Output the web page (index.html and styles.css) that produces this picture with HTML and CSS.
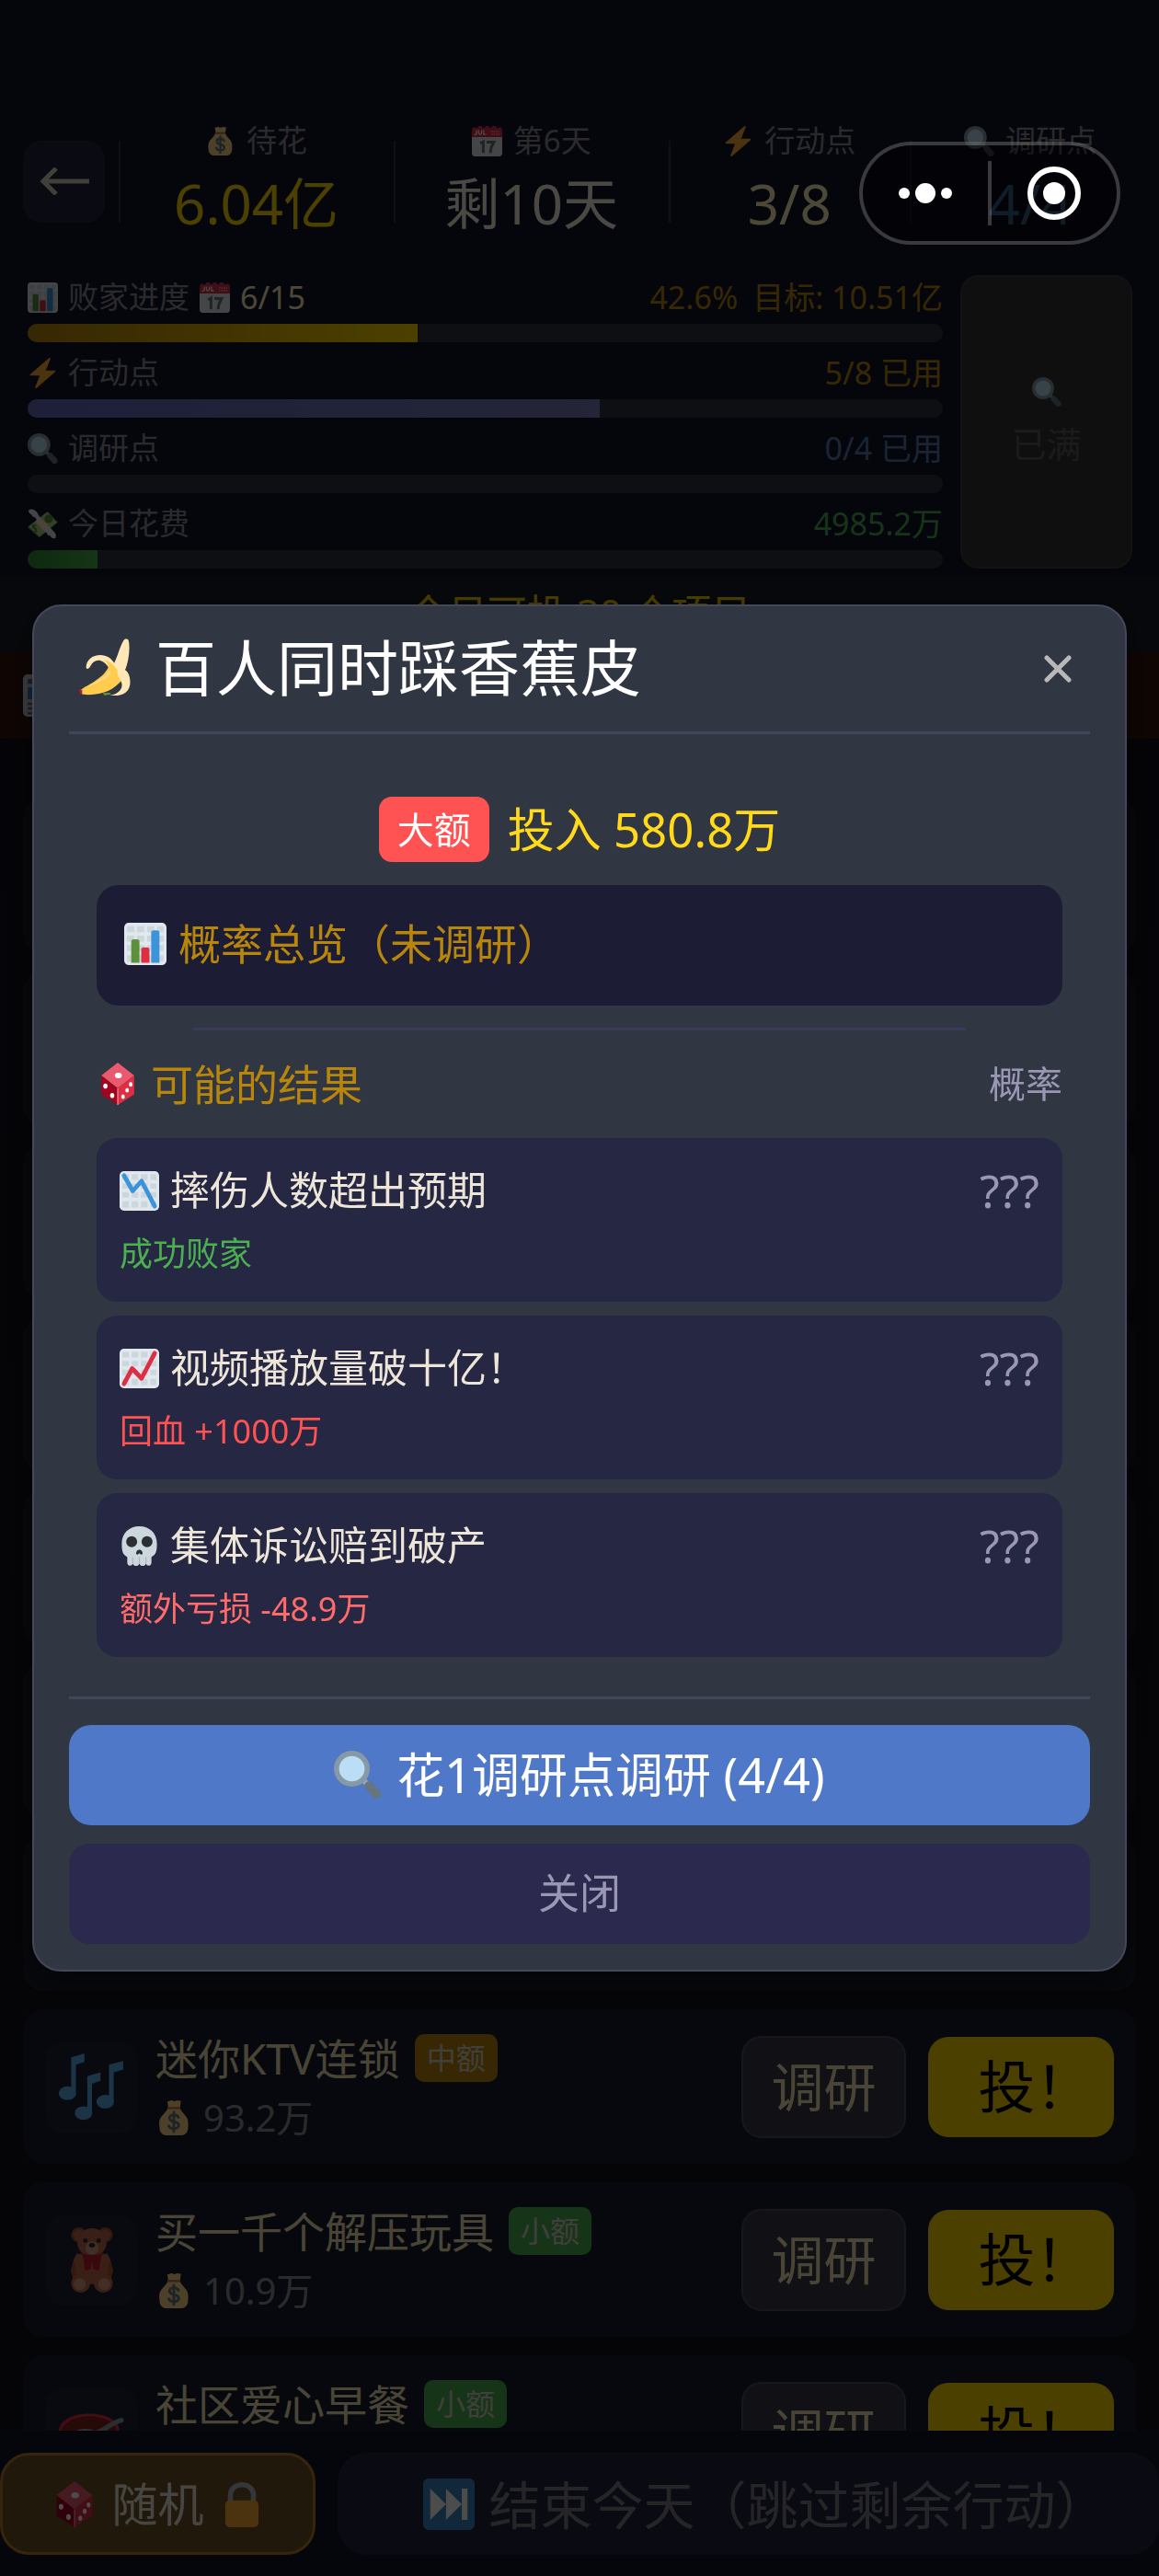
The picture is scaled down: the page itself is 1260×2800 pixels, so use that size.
FILE: index.html
```html
<!DOCTYPE html>
<html lang="zh-CN">
<head>
<meta charset="utf-8">
<meta name="viewport" content="width=device-width, initial-scale=1">
<title>百人同时踩香蕉皮</title>
<link rel="stylesheet" href="styles.css">
</head>
<body>
<svg class="sprite" aria-hidden="true">
  <symbol id="bag" viewBox="0 0 36 36">
    <path fill="#fdd888" d="M31.900 27.600c0 4-2.400 7.400-6.400 7.400h-15C6.500 35 4 31.600 4 27.600c0-2.300-1-4.800.6-8.600C6.500 14.500 12 12 12.200 7h11.600c.2 5 5.700 7.500 7.400 12 1.400 3.800.7 6.300.7 8.600z"/>
    <path fill="#bf6952" d="M12 7.200h12v2.200H12z"/>
    <path fill="#fdd888" d="M11.500 1.500c2 .8 2.500-.7 4.300-.5 1.400.1 1.600.8 2.700.8s2-1 3.500-.8c1.200.2 1.700.8 3 .4l-1 6H12.500z"/>
    <path fill="none" stroke="#67757f" stroke-width="2.600" stroke-linecap="round" d="M22.500 17.500c-1-2-3-2.500-4.500-2.500-2.400 0-4.200 1.400-4.200 3.300 0 4.800 9 2.300 9 7 0 2-2 3.400-4.700 3.400-2 0-4-.8-5-2.700M18 12.500v19"/>
  </symbol>
  <symbol id="calendar" viewBox="0 0 36 36">
    <path fill="#e0e7ec" d="M36 32a4 4 0 0 1-4 4H4a4 4 0 0 1-4-4V9a4 4 0 0 1 4-4h28a4 4 0 0 1 4 4z"/>
    <path fill="#dd2e44" d="M0 13V5a4 4 0 0 1 3-4c1 2 4 2 5-1h4c0 3 4 3 4 0h4c0 3 4 3 4 0h4c1 3 4 3 5 1a4 4 0 0 1 3 4v8z"/>
    <path fill="none" stroke="#f5f8fa" stroke-width="1.400" d="M5.500 5v4c0 1.500-2 1.500-2.500.5M8 5v3c0 2.500 3.500 2.500 3.500 0V5M14 5v5h3"/>
    <path stroke="#f4abba" stroke-width="1.500" stroke-dasharray="1.500 1.200" d="M23 6.500h10M23 9.500h10"/>
    <path fill="none" stroke="#66757f" stroke-width="3.200" d="M10 20.500l3.500-2v13.500M17.500 19H26c-2.500 4-4 8-4 13"/>
  </symbol>
  <symbol id="bolt" viewBox="0 0 36 36"><path fill="#ffac33" d="M32.900 15.500c-.2-.3-.5-.5-.9-.5H21.500L27 1.400c.3-1.100-.8-1.900-1.700-1.100L3.200 19.300c-.8.700-.3 1.700.8 1.700h10.300L9 34.600c-.3 1.200.9 1.900 1.700 1.100l22-19c.3-.3.400-.8.200-1.200z"/></symbol>
  <symbol id="lens" viewBox="0 0 36 36">
    <path stroke="#9aaab4" stroke-width="4" d="M22 22l5 5"/>
    <path stroke="#66757f" stroke-width="7" stroke-linecap="round" d="M26.500 26.500l5.500 6"/>
    <circle cx="13.500" cy="13.500" r="13.500" fill="#8899a6"/><circle cx="13.500" cy="13.500" r="9.600" fill="#bbddf5"/>
  </symbol>
  <symbol id="grid" viewBox="0 0 36 36">
    <rect width="36" height="36" rx="4" fill="#e1e8ed"/>
    <path fill="#ccd6dd" d="M2.500 3h6v5h-6zM11 3h6v5h-6zM19.500 3h6v5h-6zM28 3h5.500v5H28zM2.500 11h6v5h-6zM11 11h6v5h-6zM19.500 11h6v5h-6zM28 11h5.500v5H28zM2.500 19h6v5h-6zM11 19h6v5h-6zM19.500 19h6v5h-6zM28 19h5.500v5H28zM2.500 27.500h6v5.500h-6zM11 27.500h6v5.500h-6zM19.500 27.500h6v5.500h-6zM28 27.500h5.500v5.500H28z"/>
  </symbol>
  <symbol id="bars" viewBox="0 0 36 36">
    <use href="#grid"/>
    <path fill="#5c913b" d="M6 34V16a2 2 0 0 1 2-2h3a2 2 0 0 1 2 2v18z"/>
    <path fill="#dd2e44" d="M14.500 34V23a2 2 0 0 1 2-2h3a2 2 0 0 1 2 2v11z"/>
    <path fill="#3b94d9" d="M23 34V8.500a2 2 0 0 1 2-2h3a2 2 0 0 1 2 2V34z"/>
  </symbol>
  <symbol id="down" viewBox="0 0 36 36"><use href="#grid"/><path fill="none" stroke="#3b94d9" stroke-width="4" stroke-linecap="round" stroke-linejoin="round" d="M4 4l8 14 8-9 12 23"/></symbol>
  <symbol id="up" viewBox="0 0 36 36"><use href="#grid"/><path fill="none" stroke="#dd2e44" stroke-width="4" stroke-linecap="round" stroke-linejoin="round" d="M4 32l7.500-14 8.500 9L32 4"/></symbol>
  <symbol id="wings" viewBox="0 0 36 36">
    <path fill="#5c913b" d="M0 22L24 3l12 13-22 18z"/><path fill="#a7d28b" d="M1 21L23 4l12 12-21 17z"/>
    <path fill="#ffe8b6" d="M9 15l6-5 12 13-6 5z"/>
    <circle cx="25" cy="12" r="5" fill="#5c913b"/>
    <path fill="none" stroke="#5c913b" stroke-width="2" d="M10 20c-4-2-5 3-2 3s3 5-1 4M6 19l5 9"/>
    <path fill="#e1e8ed" d="M1 2c3-3 8-1 10 2l6 10c-6 1-7-2-8-4-3 0-4-2-4-3-2 0-4-3-4-5zM20 21c6-1 8 3 11 6 3 2 3 6 2 8-3 1-6-1-6-3-4 0-4-3-4-3-2-1-3-4-3-8z"/>
  </symbol>
  <symbol id="dice" viewBox="0 0 36 36">
    <path fill="#ea596e" d="M18 0L32 11 18 22 4 11z"/><path fill="#a0041e" d="M4 11l14 11v14L4 27z"/><path fill="#dd2e44" d="M32 11L18 22v14l14-9z"/>
    <path stroke="#f4abba" stroke-width=".8" d="M18 22v14"/>
    <g fill="#fff"><ellipse cx="18.500" cy="11" rx="3" ry="2.300"/><ellipse cx="7.500" cy="20" rx="1.800" ry="2.200"/><ellipse cx="13.300" cy="28" rx="1.800" ry="2.200"/><ellipse cx="29" cy="18.500" rx="1.500" ry="2"/><ellipse cx="26" cy="23.500" rx="1.500" ry="2"/><ellipse cx="22.500" cy="29" rx="1.500" ry="2"/></g>
  </symbol>
  <symbol id="banana" viewBox="0 0 36 36">
    <path fill="#ffe8b6" d="M24 20c-2-1-2-3-1-5 2-4 3-9 5.500-13.500C29.300 0 31 0 31.700 1c1 3 .8 11-1.700 18-1 2-4 3-6 1z"/>
    <path fill="#ffe8b6" d="M5 18.500c0-5 4-8 9-8 4 0 7 2 9 5.500l2 6-6-4c-4-6-9-5-11-1-1 2-2.500 3-3 1.500z"/>
    <path fill="#ffcc4d" d="M16 14c5 0 6 3 9 6 4 3 3 6 1 8-6 6-13 7.500-20 7.500-3 0-5-.5-4.500-3C7 29 17 24 19 18c.3-2-1-3-3-4z"/>
    <path fill="#ffd983" d="M3 31c9-3 14-7 17-11 3 2-4 8-17 11z"/>
    <path fill="#ffe8b6" d="M25 19c3-.5 6 1 7 4 2 6 .5 12-7 13-3 .3-4 .2-5 0 6-1 9-5 7-9-1-2-3-4-2-8z"/>
    <path fill="#be1931" d="M.5 32l2 .5v2.500H1.300z"/><path fill="#5c913b" d="M15.500 34.300h5v1l-4 .7z"/>
  </symbol>
  <symbol id="skull" viewBox="0 0 36 36">
    <path fill="#ccd6dd" d="M34 16C34 6 27 0 18 0S2 6 2 16c0 7 1 10 5 12v5c0 3 4 4 5 1 1 3 5 3 6 0 1 3 5 3 6 0 1 3 5 2 5-1v-5c4-2 5-5 5-12z"/>
    <path stroke="#aab8c2" d="M12 28v6M18 28v6M24 28v6"/>
    <circle cx="11" cy="14" r="5" fill="#292f33"/><circle cx="25" cy="14" r="5" fill="#292f33"/><path fill="#292f33" d="M15 25c0-5 6-5 6 0-1 1.500-2 .5-3-.5-1 1-2 2-3 .5z"/>
  </symbol>
  <symbol id="music" viewBox="0 0 36 36">
    <g fill="#5dadec"><ellipse cx="5" cy="21.500" rx="4.600" ry="3.600"/><path d="M7 21.500V2.500l7-2v4.500l-4.500 1.500v15z"/><ellipse cx="13.500" cy="32" rx="4.600" ry="3.600"/><path d="M15.500 32V12.500l7-2V15L18 16.500V32z"/><ellipse cx="25" cy="26" rx="4.600" ry="3.600"/><path d="M27 26V6.500l7.500-2V9l-5 1.500V26z"/></g>
  </symbol>
  <symbol id="bear" viewBox="0 0 36 36">
    <g fill="#a5552d"><circle cx="11" cy="5" r="4"/><circle cx="25" cy="5" r="4"/></g>
    <g fill="#c1694f"><circle cx="11" cy="5" r="2.800"/><circle cx="25" cy="5" r="2.800"/><ellipse cx="18" cy="9" rx="7.700" ry="7.500"/><path d="M10 15c-3 4-4 13 0 16h16c4-3 3-12 0-16z"/></g>
    <g fill="#a5552d"><path d="M9 19c-3 3-3 8 1 9zM27 19c3 3 3 8-1 9z"/></g>
    <circle cx="12" cy="30.500" r="5" fill="#c1694f"/><circle cx="24" cy="30.500" r="5" fill="#c1694f"/><circle cx="11.500" cy="31" r="3.200" fill="#d99e82"/><circle cx="24.500" cy="31" r="3.200" fill="#d99e82"/>
    <circle cx="18" cy="12" r="3.500" fill="#d99e82"/>
    <g fill="#292f33"><circle cx="14.500" cy="8" r="1.200"/><circle cx="21.500" cy="8" r="1.200"/><ellipse cx="18" cy="10.500" rx="1.600" ry="1.200"/></g>
    <path fill="#be1931" d="M12.500 14.500c3 1.500 8 1.500 11 0l-.8 3-1 6.500-3-1-.7-4-.7 4-3 1-.8-6.500z"/>
  </symbol>
  <symbol id="bowl" viewBox="0 0 36 36">
    <path fill="#dd2e44" d="M2 18h30c0 12-6 16-15 16S2 30 2 18z"/>
    <ellipse cx="16.500" cy="17" rx="16" ry="9" fill="#dd2e44"/><ellipse cx="16.500" cy="17.800" rx="14.800" ry="8.400" fill="#7c2419"/>
    <ellipse cx="14.500" cy="20.500" rx="8" ry="4.500" fill="#99aab5"/><path stroke="#8899a6" stroke-width="2.500" stroke-linecap="round" d="M18 18.500c6 0 9-5.500 15.500-7" fill="none"/>
  </symbol>
  <symbol id="lock" viewBox="0 0 36 36"><path fill="none" stroke="#aab8c2" stroke-width="4" d="M9 17v-6c0-11 18-11 18 0v6"/><rect x="5" y="15" width="26" height="21" rx="3.500" fill="#ffac33"/></symbol>
  <symbol id="next" viewBox="0 0 36 36"><rect width="36" height="36" rx="4" fill="#3b88c3"/><path fill="#fff" d="M5 7l11 11L5 29zM16 7l11 11-11 11zM27 7h4v22h-4z"/></symbol>
  <symbol id="phone" viewBox="0 0 36 36"><rect width="36" height="36" rx="4" fill="#ccd6dd"/><rect x="4" y="4" width="28" height="4" fill="#66757f"/><rect x="4" y="11" width="16" height="10" fill="#3b88c3"/><path stroke="#66757f" stroke-width="2" d="M4 25h28M4 29h28M4 33h28"/></symbol>
</svg>

<div class="app">
  <header class="topbar">
    <button class="back" type="button" aria-label="返回">
      <svg viewBox="0 0 54 30" aria-hidden="true"><path d="M18 1L4 15l14 14M4 15h50"/></svg>
    </button>
    <div class="stats">
      <div class="stat"><span class="stat-label"><svg class="emoji"><use href="#bag"/></svg>待花</span><strong class="stat-value gold">6.04亿</strong></div>
      <div class="stat"><span class="stat-label"><svg class="emoji"><use href="#calendar"/></svg>第6天</span><strong class="stat-value">剩10天</strong></div>
      <div class="stat"><span class="stat-label"><svg class="emoji"><use href="#bolt"/></svg>行动点</span><strong class="stat-value cream">3/8</strong></div>
      <div class="stat"><span class="stat-label"><svg class="emoji"><use href="#lens"/></svg>调研点</span><strong class="stat-value sky">4/4</strong></div>
    </div>
  </header>

  <section class="progress">
    <div class="meters">
      <div class="meter">
        <div class="meter-head"><span class="meter-name"><svg class="emoji"><use href="#bars"/></svg>败家进度 <svg class="emoji"><use href="#calendar"/></svg><b class="meter-value cream">6/15</b></span><span class="meter-value target amber">42.6% <span>目标: 10.51亿</span></span></div>
        <div class="track"><div class="fill fill-gold" style="width:42.6%"></div></div>
      </div>
      <div class="meter">
        <div class="meter-head"><span class="meter-name"><svg class="emoji"><use href="#bolt"/></svg>行动点</span><span class="meter-value amber">5/8 已用</span></div>
        <div class="track"><div class="fill fill-blue" style="width:62.5%"></div></div>
      </div>
      <div class="meter">
        <div class="meter-head"><span class="meter-name"><svg class="emoji"><use href="#lens"/></svg>调研点</span><span class="meter-value blue">0/4 已用</span></div>
        <div class="track"></div>
      </div>
      <div class="meter">
        <div class="meter-head"><span class="meter-name"><svg class="emoji"><use href="#wings"/></svg>今日花费</span><span class="meter-value green">4985.2万</span></div>
        <div class="track"><div class="fill fill-green" style="width:7.6%"></div></div>
      </div>
    </div>
    <button class="full" type="button" disabled><svg class="emoji"><use href="#lens"/></svg>已满</button>
  </section>

  <p class="today">今日可投 30 个项目</p>
  <div class="news"><svg class="news-icon" aria-hidden="true"><use href="#phone"/></svg></div>

  <ul class="projects">
    <li class="project"></li><li class="project"></li><li class="project"></li><li class="project"></li><li class="project"></li><li class="project"></li><li class="project"></li>
    <li class="project">
      <span class="tile"><svg><use href="#music"/></svg></span>
      <div class="info"><div class="name">迷你KTV连锁<span class="tag tag-mid">中额</span></div><div class="cost"><svg class="emoji"><use href="#bag"/></svg>93.2万</div></div>
      <div class="project-actions"><button class="research" type="button">调研</button><button class="invest" type="button">投！</button></div>
    </li>
    <li class="project">
      <span class="tile"><svg><use href="#bear"/></svg></span>
      <div class="info"><div class="name">买一千个解压玩具<span class="tag tag-small">小额</span></div><div class="cost"><svg class="emoji"><use href="#bag"/></svg>10.9万</div></div>
      <div class="project-actions"><button class="research" type="button">调研</button><button class="invest" type="button">投！</button></div>
    </li>
    <li class="project">
      <span class="tile"><svg><use href="#bowl"/></svg></span>
      <div class="info"><div class="name">社区爱心早餐<span class="tag tag-small">小额</span></div><div class="cost"></div></div>
      <div class="project-actions"><button class="research" type="button">调研</button><button class="invest" type="button">投！</button></div>
    </li>
  </ul>

  <footer class="actions">
    <button class="random" type="button"><svg class="emoji"><use href="#dice"/></svg>随机<svg class="emoji"><use href="#lock"/></svg></button>
    <button class="end" type="button"><svg class="emoji"><use href="#next"/></svg>结束今天（跳过剩余行动）</button>
  </footer>
</div>

<div class="overlay">
  <div class="modal" role="dialog" aria-modal="true" aria-labelledby="modal-title">
    <div class="modal-head">
      <h1 class="modal-title" id="modal-title"><svg class="emoji"><use href="#banana"/></svg>百人同时踩香蕉皮</h1>
      <button class="close-x" type="button" aria-label="关闭"><svg viewBox="0 0 30 30" aria-hidden="true"><path d="M3 3l24 24M27 3L3 27"/></svg></button>
    </div>
    <div class="modal-body">
      <div class="price"><span class="price-tag">大额</span><span class="price-text">投入 580.8万</span></div>
      <div class="overview"><svg class="emoji"><use href="#bars"/></svg>概率总览（未调研）</div>
      <hr class="rule">
      <div class="results-head"><h2 class="results-title"><svg class="emoji"><use href="#dice"/></svg>可能的结果</h2><span class="results-col">概率</span></div>
      <ul class="results">
        <li class="result"><div class="result-top"><span class="result-name"><svg class="emoji"><use href="#down"/></svg>摔伤人数超出预期</span><span class="odds">???</span></div><div class="effect effect-good">成功败家</div></li>
        <li class="result"><div class="result-top"><span class="result-name"><svg class="emoji"><use href="#up"/></svg>视频播放量破十亿！</span><span class="odds">???</span></div><div class="effect effect-bad">回血 +1000万</div></li>
        <li class="result"><div class="result-top"><span class="result-name"><svg class="emoji"><use href="#skull"/></svg>集体诉讼赔到破产</span><span class="odds">???</span></div><div class="effect effect-loss">额外亏损 -48.9万</div></li>
      </ul>
    </div>
    <div class="modal-foot">
      <button class="primary" type="button"><svg class="emoji"><use href="#lens"/></svg>花1调研点调研 (4/4)</button>
      <button class="dismiss" type="button">关闭</button>
    </div>
  </div>
</div>

<div class="capsule">
  <button class="capsule-btn" type="button" aria-label="更多"><svg class="dots" viewBox="0 0 60 24" aria-hidden="true"><circle cx="7" cy="12" r="6"/><circle cx="30" cy="12" r="11"/><circle cx="53" cy="12" r="6"/></svg></button>
  <span class="capsule-line"></span>
  <button class="capsule-btn" type="button" aria-label="退出"><svg class="ring" viewBox="0 0 60 60" aria-hidden="true"><circle class="ring-outer" cx="30" cy="30" r="26"/><circle cx="30" cy="30" r="12"/></svg></button>
</div>
</body>
</html>
```
FILE: styles.css
```css
* { box-sizing: border-box; }

body {
  margin: 0;
  background: #101019;
  color: #f5f0e0;
  font-family: "Noto Sans", "Noto Sans CJK SC", sans-serif;
  font-weight: 400;
}

button {
  margin: 0;
  padding: 0;
  border: 0;
  background: none;
  color: inherit;
  font: inherit;
  line-height: 1;
}

ul, p, h1, h2 { margin: 0; padding: 0; font-weight: 400; list-style: none; }
b, strong { font-weight: 400; }

.sprite { position: absolute; width: 0; height: 0; }
.emoji { flex: none; width: 1em; height: 1em; }

.gold { color: #ffd700; }
.cream { color: #fff0b8; }
.sky { color: #5b9bd5; }
.amber { color: #b8860b; }
.blue { color: #5878b0; }
.green { color: #4caf50; }

/* Game screen */
.app { display: flex; flex-direction: column; height: 100vh; overflow: hidden; }

.topbar {
  display: flex;
  align-items: center;
  gap: 15px;
  padding: 131px 9px 36px 25px;
  background: #12142a;
}
.back {
  display: grid;
  place-items: center;
  width: 89px;
  height: 89px;
  border-radius: 20px;
  background: #222440;
}
.back svg { width: 54px; height: 30px; fill: none; stroke: #d8d2bc; stroke-width: 5; }
.stats { flex: 1; display: grid; grid-template-columns: 8fr 8fr 7fr 7fr; }
.stat {
  display: flex;
  flex-direction: column;
  align-items: center;
  gap: 8px;
  background: linear-gradient(#32344a, #32344a) left center / 2px 89px no-repeat;
}
.stat-label { display: flex; align-items: center; gap: 12px; color: #8e8e98; font-size: 33px; line-height: 44px; }
.stat-value { font-size: 60px; line-height: 76px; padding-bottom: 4px; }

.progress { display: flex; gap: 19px; padding: 0 29px 8px 30px; background: #12142a; }
.meters { flex: 1; display: flex; flex-direction: column; gap: 9px; }
.meter { display: flex; flex-direction: column; gap: 5px; }
.meter-head { display: flex; justify-content: space-between; font-size: 33px; line-height: 48px; }
.meter-name { display: flex; align-items: center; gap: 11px; color: #8e8e98; }
.meter-value { font-size: 34px; }
.target { display: flex; gap: 16px; }
.track { height: 20px; border-radius: 10px; background: #2f323c; overflow: hidden; }
.fill { height: 100%; }
.fill-gold { background: linear-gradient(90deg, #b8860b, #ffd700); }
.fill-blue { background: linear-gradient(90deg, #646cc0, #787eb8); }
.fill-green { background: linear-gradient(90deg, #2e8b35, #4caf50); }
.full {
  display: flex;
  flex-direction: column;
  align-items: center;
  justify-content: center;
  gap: 14px;
  width: 187px;
  border: 2px solid #3c3c40;
  border-radius: 20px;
  background: #323236;
  color: #5c5c60;
  font-size: 38px;
  line-height: 52px;
}
.full .emoji { width: 32px; height: 32px; }

.today { background: #1a1d27; color: #ffd700; font-size: 43px; line-height: 82px; text-align: center; }
.news { display: flex; align-items: center; height: 95px; padding-left: 25px; background: #32150c; }
.news-icon { width: 46px; height: 46px; }

.projects {
  flex: 1;
  min-height: 0;
  display: flex;
  flex-direction: column;
  gap: 20px;
  padding: 65px 25px 0;
  overflow: hidden;
  background: linear-gradient(#10101c, #12121a);
}
.project {
  flex: none;
  display: flex;
  align-items: center;
  gap: 20px;
  min-height: 168px;
  padding: 0 24px 0 25px;
  border-radius: 22px;
  background: #191c2c;
}
.tile { display: grid; place-items: center; width: 99px; height: 99px; border-radius: 20px; background: #1f2238; }
.tile svg { width: 74px; height: 74px; }
.info { flex: 1; display: flex; flex-direction: column; gap: 14px; }
.name { display: flex; align-items: center; gap: 16px; color: #f5e6b4; font-size: 46px; line-height: 54px; }
.tag { padding: 0 13px; border-radius: 10px; color: #d8d4c8; font-size: 32px; line-height: 52px; }
.tag-mid { background: #b8860b; }
.tag-small { background: #4caf50; }
.cost { display: flex; align-items: center; gap: 12px; min-height: 48px; color: #8e8e98; font-size: 40px; line-height: 48px; }
.project-actions { display: flex; align-items: center; gap: 24px; }
.research {
  width: 179px;
  height: 111px;
  border: 2px solid #4c4c62;
  border-radius: 22px;
  background: #363648;
  color: #f5e6b4;
  font-size: 57px;
}
.invest {
  width: 202px;
  height: 109px;
  border-radius: 22px;
  background: #ffd700;
  color: #000;
  font-size: 62px;
  font-feature-settings: "halt";
}

.actions { display: flex; gap: 24px; height: 158px; padding: 24px 0 23px; background: #12142a; }
.random, .end { display: flex; align-items: center; justify-content: center; border-radius: 32px; }
.random { gap: 16px; width: 343px; border: 3px solid #b47c2a; background: #705028; color: #eee8dc; font-size: 50px; }
.end { flex: 1; gap: 16px; padding-left: 36px; background: #222440; color: #7c7c86; font-size: 56px; }

/* Dialog */
.overlay {
  position: fixed;
  inset: 0;
  display: flex;
  align-items: center;
  justify-content: center;
  padding: 0 35px;
  background: rgba(0, 0, 0, .7);
}
.modal {
  flex: 1;
  padding: 0 38px 28px;
  border: 2px solid #45485a;
  border-radius: 32px;
  background: #313643;
  box-shadow: 0 8px 32px rgba(0, 0, 0, .5);
}
.modal-head { display: flex; align-items: center; justify-content: space-between; border-bottom: 3px solid #45465a; }
.modal-title { display: flex; align-items: center; gap: 22px; padding: 0 0 4px 10px; color: #fff; font-size: 66px; line-height: 132px; }
.modal-title .emoji { width: 62px; height: 62px; }
.close-x { display: grid; place-items: center; width: 70px; height: 70px; }
.close-x svg { width: 30px; height: 30px; fill: none; stroke: #b8b8b8; stroke-width: 5; stroke-linecap: round; }

.modal-body { padding: 68px 30px 43px; }
.price { display: flex; align-items: center; justify-content: center; gap: 20px; }
.price-tag { padding: 0 20px; border-radius: 14px; background: #ff5252; color: #fff; font-size: 40px; line-height: 71px; }
.price-text { color: #ffd91a; font-size: 51px; line-height: 71px; }
.overview {
  display: flex;
  align-items: center;
  gap: 13px;
  margin-top: 25px;
  padding: 0 30px 4px;
  border-radius: 24px;
  background: #1d1c35;
  color: #b8860b;
  font-size: 46px;
  line-height: 127px;
}
.rule { width: 80%; height: 3px; margin: 24px auto 28px; border: 0; background: #3c3b57; }
.results-head { display: flex; align-items: center; justify-content: space-between; margin-bottom: 29px; line-height: 60px; }
.results-title { display: flex; align-items: center; gap: 13px; color: #b8860b; font-size: 46px; }
.results-col { color: #9a97b5; font-size: 40px; }
.results { display: flex; flex-direction: column; gap: 15px; }
.result { display: flex; flex-direction: column; gap: 15px; padding: 27px 25px 28px; border-radius: 22px; background: #262742; }
.result-top { display: flex; justify-content: space-between; font-size: 43px; line-height: 60px; }
.result-name { display: flex; align-items: center; gap: 12px; color: #ede6d8; font-feature-settings: "halt"; }
.odds { color: #9a97b5; font-size: 50px; }
.effect { font-size: 36px; line-height: 48px; }
.effect-good { color: #4caf50; }
.effect-bad { color: #ff5252; }
.effect-loss { color: #ff6b6b; }

.modal-foot { display: flex; flex-direction: column; gap: 20px; padding-top: 28px; border-top: 3px solid #45465a; }
.primary, .dismiss { display: flex; align-items: center; justify-content: center; width: 100%; height: 109px; padding-bottom: 2px; }
.primary { gap: 16px; border-radius: 24px; background: #4f78c8; color: #fff; font-size: 52px; }
.dismiss { border-radius: 22px; background: #2b294d; color: #9a97b5; font-size: 45px; }

/* Mini-program capsule floats over the screen */
.capsule {
  position: fixed;
  top: 154px;
  right: 42px;
  display: flex;
  align-items: center;
  width: 284px;
  height: 112px;
  border: 4px solid rgba(255, 255, 255, .22);
  border-radius: 56px;
  background: rgba(0, 0, 0, .4);
}
.capsule-btn { flex: 1; display: grid; place-items: center; height: 100%; }
.capsule-line { width: 4px; height: 70px; background: rgba(255, 255, 255, .22); }
.capsule svg { fill: #fff; }
.dots { width: 60px; height: 24px; }
.ring { width: 60px; height: 60px; }
.ring-outer { fill: none; stroke: #fff; stroke-width: 6; }
```
